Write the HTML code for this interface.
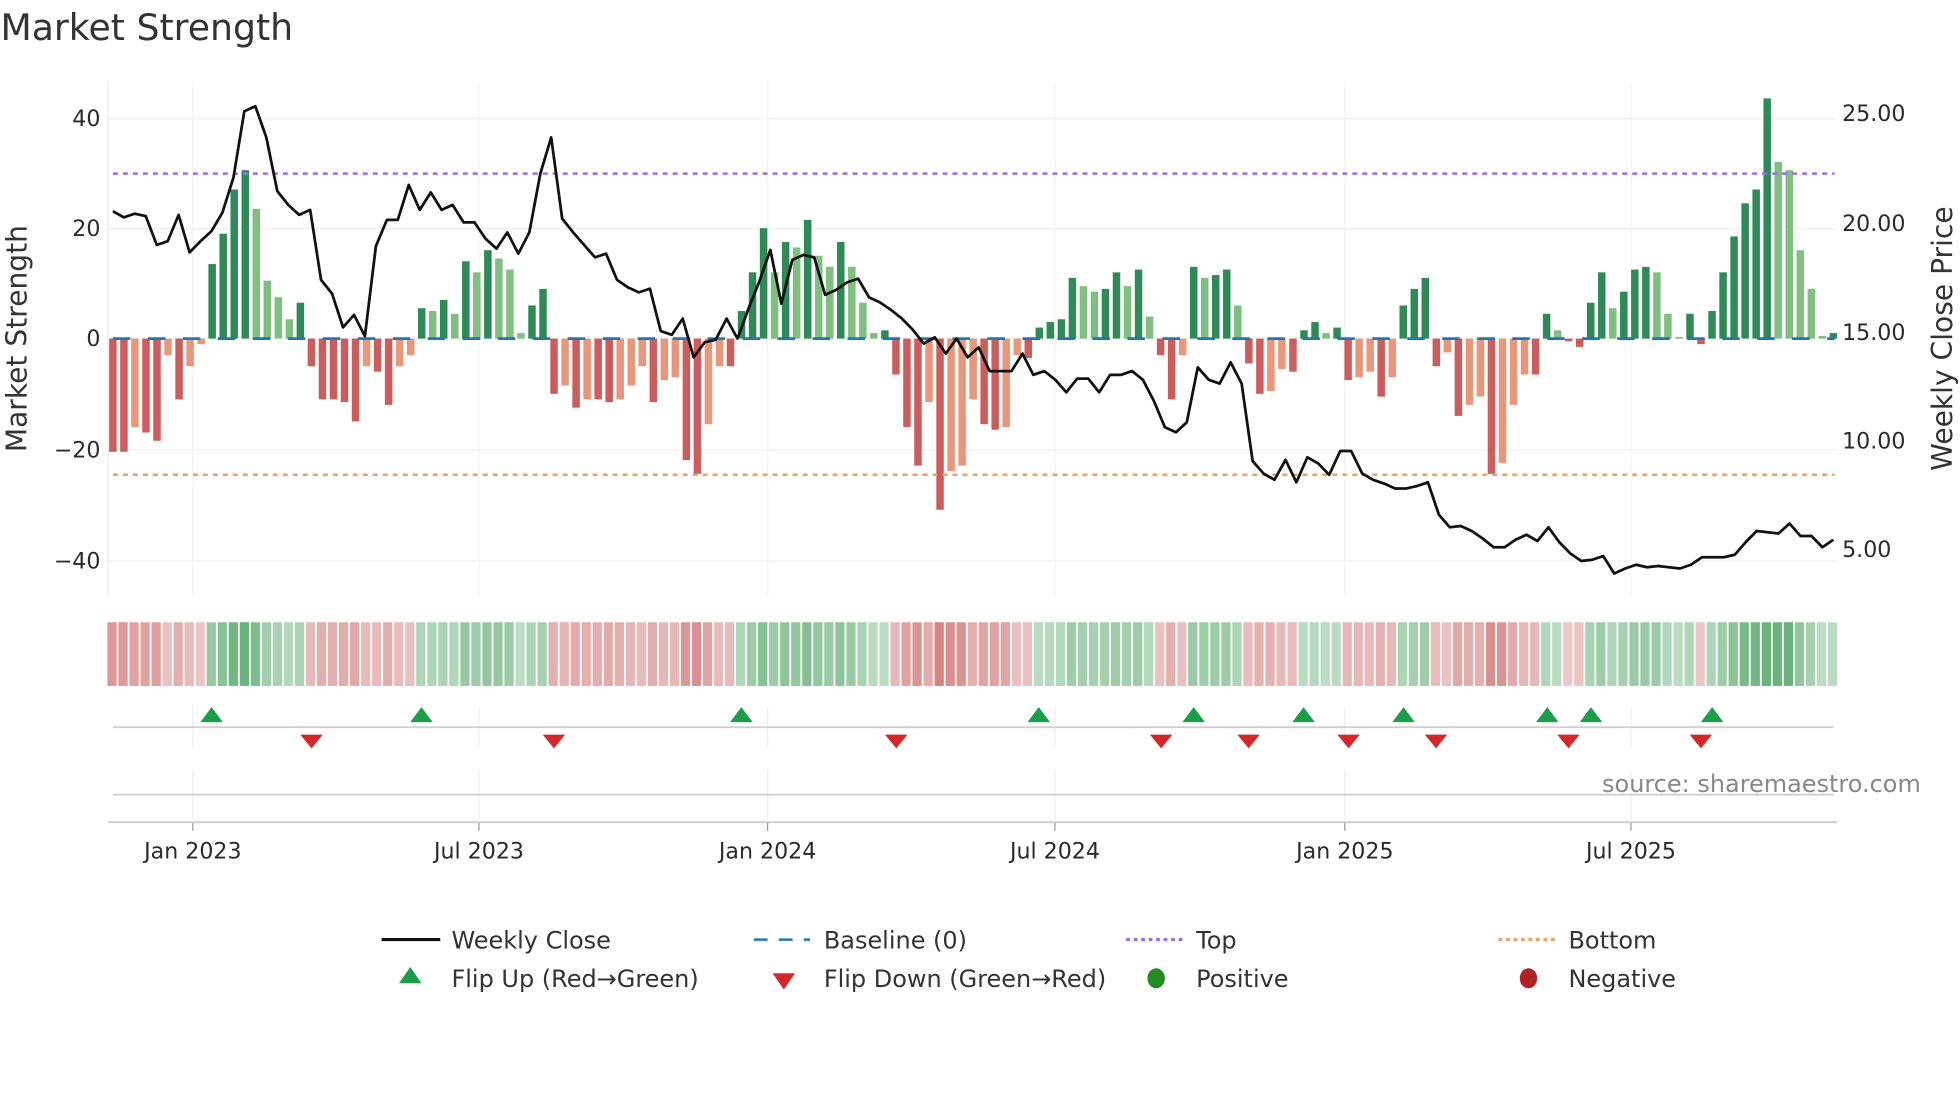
<!DOCTYPE html>
<html><head><meta charset="utf-8"><style>
html,body{margin:0;padding:0;background:#fff;}
svg{display:block;font-family:"DejaVu Sans","Liberation Sans",sans-serif;}
</style></head><body>
<svg id="s" width="1960" height="1102" viewBox="0 0 1568 882" xmlns="http://www.w3.org/2000/svg">
<rect width="1568" height="882" fill="#fff"/>
<text x="0" y="32" font-size="29" fill="#333">Market Strength</text>
<g id="grid"></g>
<g id="bars"></g>
<g id="heat"></g>
<g id="marks"></g>
<g font-size="17.7" fill="#2a2a2a">
<text x="80" y="101" text-anchor="end">40</text>
<text x="80" y="189" text-anchor="end">20</text>
<text x="80" y="277" text-anchor="end">0</text>
<text x="80" y="366" text-anchor="end">−20</text>
<text x="80" y="455" text-anchor="end">−40</text>
<text x="1474" y="97">25.00</text>
<text x="1474" y="185">20.00</text>
<text x="1474" y="272">15.00</text>
<text x="1474" y="359">10.00</text>
<text x="1474" y="446">5.00</text>
<text x="154" y="687" text-anchor="middle">Jan 2023</text>
<text x="383" y="687" text-anchor="middle">Jul 2023</text>
<text x="614" y="687" text-anchor="middle">Jan 2024</text>
<text x="844" y="687" text-anchor="middle">Jul 2024</text>
<text x="1076" y="687" text-anchor="middle">Jan 2025</text>
<text x="1305" y="687" text-anchor="middle">Jul 2025</text>
</g>
<text transform="translate(21,271) rotate(-90)" font-size="22.5" fill="#333" text-anchor="middle">Market Strength</text>
<text transform="translate(1562,271) rotate(-90)" font-size="22.5" fill="#333" text-anchor="middle">Weekly Close Price</text>
<text x="1537" y="634" font-size="19.2" fill="#888" text-anchor="end">source: sharemaestro.com</text>
<g font-size="19.2" fill="#333">
<line x1="305" y1="752" x2="352" y2="752" stroke="#111" stroke-width="2.5"/>
<text x="361" y="759">Weekly Close</text>
<line x1="603" y1="752" x2="648" y2="752" stroke="#1f77b4" stroke-width="2" stroke-dasharray="11,9"/>
<text x="659" y="759">Baseline (0)</text>
<line x1="901" y1="752" x2="946" y2="752" stroke="#9b6fe0" stroke-width="2.5" stroke-dasharray="3,3"/>
<text x="957" y="759">Top</text>
<line x1="1199" y1="752" x2="1244" y2="752" stroke="#f0a060" stroke-width="2.5" stroke-dasharray="3,3"/>
<text x="1255" y="759">Bottom</text>
<polygon points="328,774 319,787 337,787" fill="#1a9e4a"/>
<text x="361" y="790">Flip Up (Red→Green)</text>
<polygon points="618,779 636,779 627,792" fill="#d62728"/>
<text x="659" y="790">Flip Down (Green→Red)</text>
<ellipse cx="925" cy="783" rx="7" ry="8" fill="#228b22"/>
<text x="957" y="790">Positive</text>
<ellipse cx="1223" cy="783" rx="7" ry="8" fill="#b22222"/>
<text x="1255" y="790">Negative</text>
</g>
</svg>
<script>
var NS="http://www.w3.org/2000/svg";
function el(p,t,a){var e=document.createElementNS(NS,t);for(var k in a)e.setAttribute(k,a[k]);p.appendChild(e);return e;}
var v=[-20.5,-20.5,-16,-17,-18.5,-3,-11,-5,-1,13.5,19,27,30.5,23.5,10.5,7.5,3.5,6.5,-5,-11,-11,-11.5,-15,-5,-6,-12,-5,-3,5.5,5,7,4.5,14,12,16,14.5,12.5,1,6,9,-10,-8.5,-12.5,-11,-11,-11.5,-11,-8.5,-5,-11.5,-7.5,-7,-22,-24.5,-15.5,-5,-5,5,12,20,12,17.5,16.5,21.5,15,13,17.5,13,6.5,1,1.5,-6.5,-16,-23,-11.5,-31,-24,-23,-11,-15.5,-16.5,-16,-3,-3.5,2,3,3.5,11,9.5,8.5,9,12,9.5,12.5,4,-3,-11,-3,13,11,11.5,12.5,6,-4.5,-10,-9.5,-5.5,-6,1.5,3,1,2,-7.5,-7,-6,-10.5,-7,6,9,11,-5,-2.5,-14,-12,-10.5,-24.5,-22.5,-12,-6.5,-6.5,4.5,1.5,-0.5,-1.5,6.5,12,5.5,8.5,12.5,13,12,4.5,0.3,4.5,-1,5,12,18.5,24.5,27,43.5,32,30.5,16,9,0.5,1];
var N=v.length,x0=90,dx=(1467-90)/(N-1);
var g=document.getElementById('grid');
[95,183,271,360,449].forEach(function(y){el(g,'line',{x1:86,x2:1470,y1:y,y2:y,stroke:'#eef0f3','stroke-width':1});});
[154,383,614,844,1076,1305].forEach(function(x){el(g,'line',{x1:x,x2:x,y1:65,y2:478,stroke:'#f3f4f7','stroke-width':1});el(g,'line',{x1:x,x2:x,y1:566,y2:598,stroke:'#eceef2'});el(g,'line',{x1:x,x2:x,y1:616,y2:656,stroke:'#eceef2'});el(g,'line',{x1:x,x2:x,y1:658,y2:665,stroke:'#999'});});
el(g,'line',{x1:86,x2:86,y1:65,y2:478,stroke:'#eceef2'});
var b=document.getElementById('bars');
for(var i=0;i<N;i++){var x=x0+i*dx,val=v[i],p=i?v[i-1]:0,c;
 if(val>=0)c=(val>=p)?'#2e8b57':'#7fbf7f';else c=(val<=p)?'#cd5c5c':'#e9967a';
 var y=271-val*4.42;el(b,'rect',{x:x-3,y:Math.min(y,271),width:6,height:Math.abs(val*4.42),fill:c});}
el(b,'line',{x1:90,x2:1468,y1:271,y2:271,stroke:'#1f77b4','stroke-width':2.2,'stroke-dasharray':'14,14'});
el(b,'line',{x1:90,x2:1468,y1:139,y2:139,stroke:'#9b6fe0','stroke-width':2,'stroke-dasharray':'4,4'});
el(b,'line',{x1:90,x2:1468,y1:380,y2:380,stroke:'#f0a060','stroke-width':2,'stroke-dasharray':'4,4'});
var pr=[169,174,171,173,196,193,172,202,193,185,170,142,89,85,110,153,164,172,168,224,235,262,252,269,197,176,176,148,168,154,168,164,178,178,191,199,186,203,186,139,110,175,186,196,206,203,224,230,234,231,265,268,255,286,274,272,255,271,247,225,200,243,208,204,206,236,232,226,223,238,242,248,255,264,275,270,283,271,286,278,297,297,297,283,300,297,304,314,303,303,314,300,300,297,304,321,342,346,338,294,304,307,290,307,369,379,384,368,386,366,371,380,361,361,379,384,387,391,391,389,386,412,422,421,425,431,438,438,432,428,433,422,434,443,449,448,445,459,455,452,454,453,454,455,452,446,446,446,444,434,425,426,427,419,429,429,438,432];
var pts=[],pdx=(1467-90)/(pr.length-1);for(i=0;i<pr.length;i++)pts.push((90+i*pdx).toFixed(1)+','+pr[i]);
el(b,'polyline',{points:pts.join(' '),fill:'none',stroke:'#111','stroke-width':2.2,'stroke-linejoin':'round'});
var h=document.getElementById('heat');
for(i=0;i<N;i++){var val=v[i],t=Math.min(1,0.25+Math.abs(val)/40);var c=val>=0?'#3a9a52':'#c85a5a';
 el(h,'rect',{x:x0+i*dx-dx/2,y:498,width:dx-1.4,height:51,fill:c,'fill-opacity':(0.2+0.55*t).toFixed(2)});}
var m=document.getElementById('marks');
el(m,'line',{x1:90,x2:1467,y1:582,y2:582,stroke:'#d0d0d0','stroke-width':1.5});
el(m,'line',{x1:90,x2:1467,y1:636,y2:636,stroke:'#d0d0d0','stroke-width':1.5});
el(m,'line',{x1:86,x2:1470,y1:658,y2:658,stroke:'#ccc','stroke-width':1.5});
[169,337,593,831,955,1043,1123,1238,1273,1370].forEach(function(x){el(m,'polygon',{points:(x)+',566 '+(x-9)+',578 '+(x+9)+',578',fill:'#1a9e4a'});});
[249,443,717,929,999,1079,1149,1255,1361].forEach(function(x){el(m,'polygon',{points:(x-9)+',588 '+(x+9)+',588 '+x+',599',fill:'#d62728'});});
</script>
</body></html>
